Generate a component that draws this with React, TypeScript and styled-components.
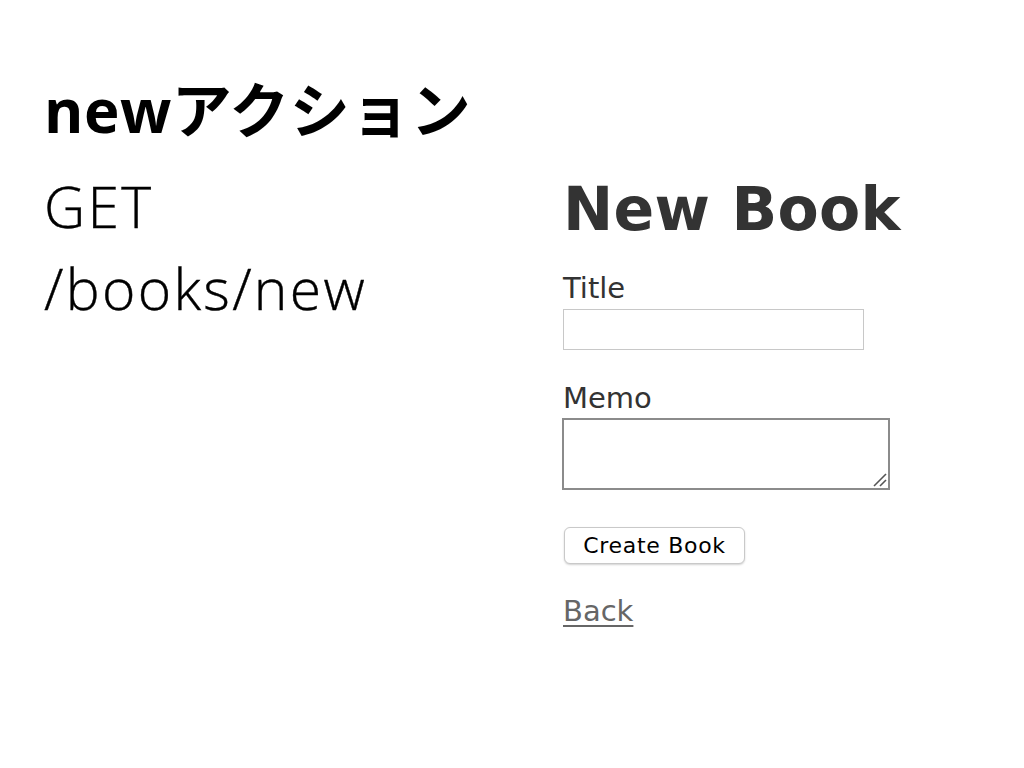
import React from 'react';
import styled, { createGlobalStyle } from 'styled-components';

const GlobalStyle = createGlobalStyle`
  html, body {
    margin: 0;
    padding: 0;
    background: #fff;
  }
  body {
    width: 1024px;
    height: 768px;
    overflow: hidden;
  }
`;

const Slide = styled.div`
  box-sizing: border-box;
  width: 1024px;
  height: 768px;
  padding: 81px 0 0 44px;
  color: #000;
`;

const SlideTitle = styled.h1`
  margin: 0;
  font-family: 'Open Sans', 'Noto Sans CJK JP', sans-serif;
  font-weight: 700;
  font-size: 60px;
  line-height: 58px;
  height: 58px;
  letter-spacing: 0.5px;
`;

const SlideBody = styled.div`
  display: flex;
  align-items: flex-start;
  margin-top: 26px;
`;

const TextColumn = styled.div`
  width: 519px;
  flex-shrink: 0;
`;

const SlideLine = styled.div`
  font-family: 'Open Sans', 'Noto Sans CJK JP', sans-serif;
  font-weight: 300;
  font-size: 57px;
  line-height: 82px;
  letter-spacing: 2.3px;
  -webkit-text-stroke: 0.4px #000;
`;

const Capture = styled.div`
  padding-top: 14px;
  color: #333;
  font-family: 'DejaVu Sans', Verdana, sans-serif;
  font-size: 29px;
  line-height: 40px;
`;

const PageHeading = styled.h2`
  margin: 0;
  font-size: 60px;
  line-height: 60px;
  font-weight: 700;
  letter-spacing: 0.3px;
`;

const Field = styled.div<{ $gap: number }>`
  margin-top: ${(p) => p.$gap}px;
`;

const Label = styled.label`
  display: block;
  height: 40px;
`;

const TextInput = styled.input`
  display: block;
  box-sizing: border-box;
  width: 301px;
  height: 41px;
  margin: 1px 0 0 0;
  border: 1px solid #c8c8c8;
  background: #fff;
  outline: none;
`;

const MemoBox = styled.div`
  position: relative;
  width: 328px;
  height: 72px;
  margin-left: -1px;
`;

const MemoArea = styled.textarea`
  display: block;
  box-sizing: border-box;
  width: 100%;
  height: 100%;
  margin: 0;
  border: 2px solid #8b8b8b;
  background: #fff;
  outline: none;
  resize: none;
`;

const Grip = styled.svg`
  position: absolute;
  right: 3px;
  bottom: 3px;
  width: 16px;
  height: 16px;
  pointer-events: none;
`;

const Actions = styled.div`
  margin-top: 37px;
`;

const SubmitButton = styled.button`
  display: block;
  box-sizing: border-box;
  width: 181px;
  height: 37px;
  margin-left: 1px;
  padding: 0;
  border: 1px solid #c9c9c9;
  border-radius: 6px;
  background: #fff;
  box-shadow: 0 1px 2px rgba(0, 0, 0, 0.18);
  color: #000;
  font-family: 'DejaVu Sans', sans-serif;
  font-size: 22px;
  letter-spacing: 0.7px;
`;

const BackLink = styled.a`
  display: inline-block;
  margin-top: 27px;
  color: #666;
  text-decoration: underline;
  text-underline-offset: 4px;
  text-decoration-thickness: 2px;
`;

export default function App() {
  return (
    <>
      <GlobalStyle />
      <Slide>
        <SlideTitle>newアクション</SlideTitle>
        <SlideBody>
          <TextColumn>
            <SlideLine>GET</SlideLine>
            <SlideLine>/books/new</SlideLine>
          </TextColumn>
          <Capture>
            <PageHeading>New Book</PageHeading>
            <Field $gap={29}>
              <Label htmlFor="book_title">Title</Label>
              <TextInput id="book_title" type="text" />
            </Field>
            <Field $gap={28}>
              <Label htmlFor="book_memo">Memo</Label>
              <MemoBox>
                <MemoArea id="book_memo" />
                <Grip viewBox="0 0 16 16">
                  <line x1="15" y1="3" x2="3" y2="15" stroke="#555" strokeWidth="1.6" />
                  <line x1="15" y1="9" x2="9" y2="15" stroke="#555" strokeWidth="1.6" />
                </Grip>
              </MemoBox>
            </Field>
            <Actions>
              <SubmitButton type="button">Create Book</SubmitButton>
            </Actions>
            <BackLink href="#">Back</BackLink>
          </Capture>
        </SlideBody>
      </Slide>
    </>
  );
}
